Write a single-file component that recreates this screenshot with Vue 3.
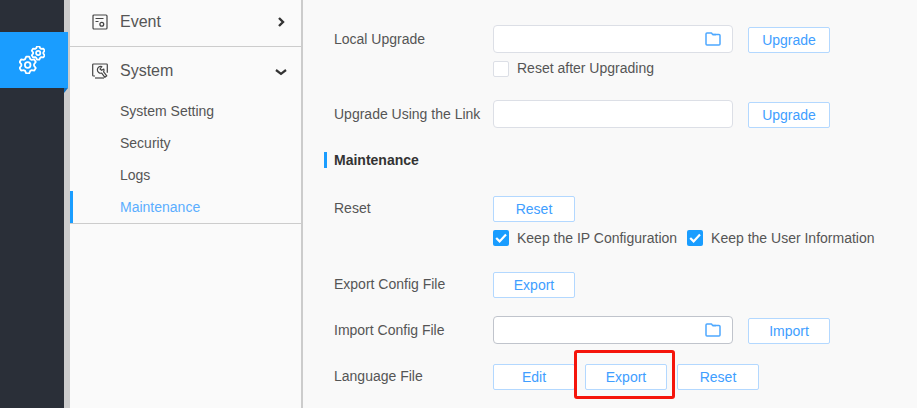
<template>
  <div class="page">
    <div class="rail">
      <div class="rail-item">
        <svg class="gears" viewBox="0 0 26 28" fill="none" stroke="#fff" stroke-width="1.8" stroke-linejoin="round">
          <path :d="gearPath(8.7, 19, 8.6, 6.4)" />
          <circle cx="8.7" cy="19" r="2.8" />
          <path :d="gearPath(19.2, 7, 6.8, 5.1)" />
          <circle cx="19.2" cy="7" r="2.1" />
        </svg>
        <span class="rail-tip"></span>
      </div>
    </div>

    <aside class="sidebar">
      <div class="menu-head event">
        <svg class="menu-icon" viewBox="0 0 16 16" fill="none" stroke="#444" stroke-width="1.2">
          <rect x="1" y="1" width="14" height="14" rx="1" />
          <path d="M3.5 4.5h8M3.5 7.5h3" />
          <circle cx="9.8" cy="10.3" r="1.9" stroke-width="1.3" />
        </svg>
        <span class="menu-title">Event</span>
        <svg class="chevron right" viewBox="0 0 8 10" fill="none" stroke="#333" stroke-width="2.4"><path d="M2 1l4 4-4 4" /></svg>
      </div>
      <div class="menu-group">
        <div class="menu-head">
          <svg class="menu-icon" viewBox="0 0 16 16" fill="none" stroke="#444" stroke-width="1.2">
            <path d="M3 13H1.5a.8.8 0 0 1-.8-.8V1.8a.8.8 0 0 1 .8-.8h13a.8.8 0 0 1 .8.8v8" />
            <path d="M9.8 3.6a3.4 3.4 0 1 0-.1 6.5l3.2 4.2 1.9-1.5-3.2-4a3.4 3.4 0 0 0 .2-2.8L9.7 7.3 8 6z" stroke-linejoin="round" />
            <path d="M3 15h9" />
          </svg>
          <span class="menu-title">System</span>
          <svg class="chevron down" viewBox="0 0 12 8" fill="none" stroke="#333" stroke-width="2.2"><path d="M1 2l5 3.8L11 2" /></svg>
        </div>
        <a v-for="item in subItems" :key="item" class="sub-item" :class="{ active: item === 'Maintenance' }">{{ item }}</a>
      </div>
    </aside>

    <main class="content">
      <div class="row first">
        <label class="label">Local Upgrade</label>
        <div class="fields">
          <div class="line">
            <div class="input">
              <svg class="folder" viewBox="0 0 16 14" fill="none" stroke="#4da8ff" stroke-width="1.5" stroke-linejoin="round"><path d="M1 2a1 1 0 0 1 1-1h4.5l1.2 1.6H14a1 1 0 0 1 1 1V12a1 1 0 0 1-1 1H2a1 1 0 0 1-1-1z" /><path d="M7.7 2.6H11" /></svg>
            </div>
            <button class="btn side">Upgrade</button>
          </div>
          <label class="check-line raised">
            <span class="check"></span>
            <span class="check-text">Reset after Upgrading</span>
          </label>
        </div>
      </div>

      <div class="row link">
        <label class="label">Upgrade Using the Link</label>
        <div class="line">
          <div class="input"></div>
          <button class="btn side">Upgrade</button>
        </div>
      </div>

      <h3 class="section">Maintenance</h3>

      <div class="row reset">
        <label class="label">Reset</label>
        <div class="fields">
          <button class="btn">Reset</button>
          <div class="check-line">
            <span class="check on"><svg viewBox="0 0 16 16" fill="none" stroke="#fff" stroke-width="2.2"><path d="M3.2 8l3.4 3.4 6.4-6.8" /></svg></span>
            <span class="check-text">Keep the IP Configuration</span>
            <span class="check on second"><svg viewBox="0 0 16 16" fill="none" stroke="#fff" stroke-width="2.2"><path d="M3.2 8l3.4 3.4 6.4-6.8" /></svg></span>
            <span class="check-text">Keep the User Information</span>
          </div>
        </div>
      </div>

      <div class="row export">
        <label class="label">Export Config File</label>
        <button class="btn">Export</button>
      </div>

      <div class="row import">
        <label class="label">Import Config File</label>
        <div class="line">
          <div class="input dark">
            <svg class="folder" viewBox="0 0 16 14" fill="none" stroke="#4da8ff" stroke-width="1.5" stroke-linejoin="round"><path d="M1 2a1 1 0 0 1 1-1h4.5l1.2 1.6H14a1 1 0 0 1 1 1V12a1 1 0 0 1-1 1H2a1 1 0 0 1-1-1z" /><path d="M7.7 2.6H11" /></svg>
          </div>
          <button class="btn side">Import</button>
        </div>
      </div>

      <div class="row language">
        <label class="label">Language File</label>
        <div class="btn-group">
          <button class="btn">Edit</button>
          <span class="highlighted">
            <button class="btn">Export</button>
            <span class="red-box"></span>
          </span>
          <button class="btn">Reset</button>
        </div>
      </div>
    </main>
  </div>
</template>

<script setup>
const subItems = ['System Setting', 'Security', 'Logs', 'Maintenance']

// six flat teeth, each with two outer and two inner corners
function gearPath(cx, cy, outer, inner) {
  const pts = []
  const deg = Math.PI / 180
  for (let i = 0; i < 6; i++) {
    const mid = i * 60 - 90
    const corners = [[-24, inner], [-10, outer], [10, outer], [24, inner]]
    for (const [offset, r] of corners) {
      const a = (mid + offset) * deg
      pts.push(`${(cx + r * Math.cos(a)).toFixed(2)} ${(cy + r * Math.sin(a)).toFixed(2)}`)
    }
  }
  return `M${pts.join('L')}Z`
}
</script>

<style>
html,
body {
  margin: 0;
  overflow: hidden;
}
</style>

<style scoped>
.page {
  display: flex;
  width: 917px;
  height: 408px;
  overflow: hidden;
  font-family: "Liberation Sans", Arial, sans-serif;
  font-size: 14px;
  color: #555;
  background: #f9f9f9;
}

.rail {
  flex: 0 0 64px;
  min-width: 0;
  background: #2a2f38;
  padding-top: 32px;
  box-sizing: border-box;
  position: relative;
  z-index: 1;
}

.rail-item {
  position: relative;
  display: flex;
  align-items: center;
  width: 68px;
  height: 56px;
  padding-left: 19px;
  box-sizing: border-box;
  background: #1a9dff;
}

.rail-tip {
  position: absolute;
  left: 64px;
  top: 56px;
  border-top: 5px solid #0f6fc0;
  border-right: 4px solid transparent;
}

.gears {
  width: 26px;
  height: 28px;
}

.sidebar {
  flex: 0 0 231px;
  margin-left: 6px;
  margin-right: 2px;
  background: #fafafa;
  position: relative;
  box-shadow: -6px 0 0 #cccccc, 2px 0 0 #cccccc;
}

.menu-head {
  display: flex;
  align-items: center;
  height: 48px;
  box-sizing: border-box;
  padding-left: 22px;
  position: relative;
}

.menu-head.event {
  height: 47px;
  border-bottom: 1px solid #cccccc;
  padding-bottom: 3px;
}

.menu-group {
  border-bottom: 1px solid #cccccc;
}

.menu-icon {
  width: 16px;
  height: 16px;
}

.menu-title {
  margin-left: 12px;
  font-size: 16px;
}

.chevron {
  position: absolute;
}

.chevron.right {
  right: 16px;
  top: 17px;
  width: 8px;
  height: 10px;
}

.chevron.down {
  right: 14px;
  top: 21px;
  width: 12px;
  height: 8px;
}

.sub-item {
  display: flex;
  align-items: center;
  height: 32px;
  padding-left: 50px;
  box-sizing: border-box;
}

.sub-item.active {
  color: #5aaeff;
  border-left: 3px solid #1a9dff;
  padding-left: 47px;
}

.content {
  flex: 1;
  padding-left: 31px;
  box-sizing: border-box;
}

.row {
  display: flex;
  align-items: flex-start;
}

.row.first {
  margin-top: 25px;
}

.row.link {
  margin-top: 23px;
}

.row.reset {
  margin-top: 28px;
}

.row.export {
  margin-top: 26px;
}

.row.import {
  margin-top: 18px;
}

.row.language {
  margin-top: 20px;
}

.label {
  flex: 0 0 159px;
  line-height: 28px;
}

.row.reset .label,
.row.export .label,
.row.language .label {
  line-height: 24px;
}

.fields {
  display: flex;
  flex-direction: column;
  align-items: flex-start;
}

.line {
  display: flex;
  align-items: flex-end;
}

.input {
  display: flex;
  align-items: center;
  justify-content: flex-end;
  width: 240px;
  height: 28px;
  box-sizing: border-box;
  padding-right: 11px;
  background: #fff;
  border: 1px solid #dcdfe6;
  border-radius: 4px;
}

.input.dark {
  border-color: #c0c4cc;
}

.folder {
  width: 16px;
  height: 14px;
}

.btn {
  width: 82px;
  height: 26px;
  padding: 0;
  box-sizing: border-box;
  background: #fff;
  border: 1px solid #b3d8ff;
  border-radius: 2px;
  color: #409eff;
  font: inherit;
  cursor: pointer;
}

.btn.side {
  margin-left: 15px;
}

.check-line {
  display: flex;
  align-items: center;
  height: 16px;
  margin-top: 8px;
  white-space: nowrap;
}

.check-line.raised .check-text {
  margin-bottom: 2px;
}

.check {
  display: inline-flex;
  flex: 0 0 16px;
  width: 16px;
  height: 16px;
  box-sizing: border-box;
  margin-right: 8px;
  background: #fff;
  border: 1px solid #dcdfe6;
  border-radius: 2px;
}

.check.on {
  background: #1a9dff;
  border: 0;
}

.check.second {
  margin-left: 10px;
}

.section {
  margin: 24px 0 0 -10px;
  padding-left: 7px;
  border-left: 3px solid #1a9dff;
  font-size: 14px;
  line-height: 16px;
  color: #333;
}

.btn-group {
  display: flex;
  gap: 10px;
}

.highlighted {
  position: relative;
  display: block;
  height: 26px;
}

.red-box {
  position: absolute;
  left: -11px;
  top: -14px;
  width: 95px;
  height: 43px;
  border: 3px solid #f5150c;
  border-radius: 3px;
  pointer-events: none;
}
</style>
